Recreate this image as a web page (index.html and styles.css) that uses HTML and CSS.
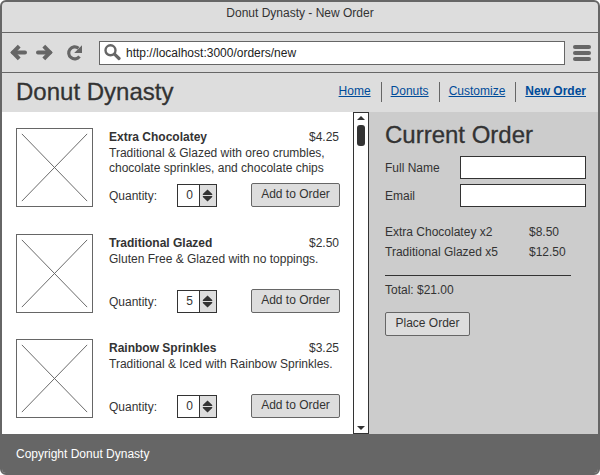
FILE: index.html
```html
<!DOCTYPE html>
<html lang="en">
<head>
<meta charset="utf-8">
<title>Donut Dynasty - New Order</title>
<link rel="stylesheet" href="styles.css">
</head>
<body>
<div class="window">
  <div class="titlebar">Donut Dynasty - New Order</div>
  <div class="toolbar">
    <svg class="nav-icons" width="74" height="17" viewBox="0 0 74 17" fill="none" stroke="#666" stroke-width="4">
      <path d="M3 8.5H15M28 8.5H40" stroke-linecap="round"/>
      <path d="M9.2 2.2L3 8.5L9.2 14.8M33.8 2.2L40 8.5L33.8 14.8"/>
      <path d="M69.5 12.5A6 6 0 1 1 68.5 4.2" stroke-width="3.2"/>
      <path d="M72 1.2V9H64.2Z" fill="#666" stroke="none"/>
    </svg>
    <div class="address">
      <svg width="17" height="17" viewBox="0 0 17 17" fill="none" stroke="#666"><circle cx="6.5" cy="6.3" r="5" stroke-width="2.4"/><path d="M10.5 10.2L15 14.5" stroke-width="3.2" stroke-linecap="round"/></svg>
      <span>http://localhost:3000/orders/new</span>
    </div>
    <div class="menu"><i></i><i></i><i></i></div>
  </div>
  <header class="header">
    <h1>Donut Dynasty</h1>
    <nav><a>Home</a><a>Donuts</a><a>Customize</a><a class="current">New Order</a></nav>
  </header>
  <main class="main">
    <section class="products">
      <article class="product">
        <svg class="thumb" width="77" height="79" viewBox="0 0 77 79"><path d="M5 5L72 74M72 5L5 74"/></svg>
        <div class="info">
          <div class="name"><b>Extra Chocolatey</b><span>$4.25</span></div>
          <p>Traditional &amp; Glazed with oreo crumbles,<br>chocolate sprinkles, and chocolate chips</p>
          <div class="actions"><span class="label">Quantity:</span><div class="spinner"><span>0</span><svg width="17" height="21" viewBox="0 0 17 21"><path d="M8 4L13 9V10H3V9ZM8 17L13 12V11H3V12Z"/></svg></div><button class="add">Add to Order</button></div>
        </div>
      </article>
      <article class="product">
        <svg class="thumb" width="77" height="79" viewBox="0 0 77 79"><path d="M5 5L72 74M72 5L5 74"/></svg>
        <div class="info">
          <div class="name"><b>Traditional Glazed</b><span>$2.50</span></div>
          <p>Gluten Free &amp; Glazed with no toppings.</p>
          <div class="actions"><span class="label">Quantity:</span><div class="spinner"><span>5</span><svg width="17" height="21" viewBox="0 0 17 21"><path d="M8 4L13 9V10H3V9ZM8 17L13 12V11H3V12Z"/></svg></div><button class="add">Add to Order</button></div>
        </div>
      </article>
      <article class="product">
        <svg class="thumb" width="77" height="79" viewBox="0 0 77 79"><path d="M5 5L72 74M72 5L5 74"/></svg>
        <div class="info">
          <div class="name"><b>Rainbow Sprinkles</b><span>$3.25</span></div>
          <p>Traditional &amp; Iced with Rainbow Sprinkles.</p>
          <div class="actions"><span class="label">Quantity:</span><div class="spinner"><span>0</span><svg width="17" height="21" viewBox="0 0 17 21"><path d="M8 4L13 9V10H3V9ZM8 17L13 12V11H3V12Z"/></svg></div><button class="add">Add to Order</button></div>
        </div>
      </article>
    </section>
    <div class="scrollbar">
      <svg width="8" height="4" viewBox="0 0 8 4"><path d="M4 0L8 4H0Z"/></svg>
      <div class="handle"></div>
      <svg class="down" width="8" height="4" viewBox="0 0 8 4"><path d="M0 0H8L4 4Z"/></svg>
    </div>
    <aside class="order">
      <h2>Current Order</h2>
      <label class="field"><span>Full Name</span><input type="text"></label>
      <label class="field"><span>Email</span><input type="text"></label>
      <div class="lines">
        <div><span>Extra Chocolatey x2</span><span>$8.50</span></div>
        <div><span>Traditional Glazed x5</span><span>$12.50</span></div>
      </div>
      <div class="total">Total: $21.00</div>
      <button class="place">Place Order</button>
    </aside>
  </main>
  <footer class="footer">Copyright Donut Dynasty</footer>
</div>
</body>
</html>
```
FILE: styles.css
```css
* { box-sizing: border-box; }
body { margin: 0; background: #fff; color: #333; font: 12px/15px "Liberation Sans", Arial, sans-serif; }
h1, h2, p { margin: 0; font-weight: normal; }
h1, h2 { -webkit-text-stroke: .3px #333; }
.window { width: 600px; height: 475px; border: 2px solid #666; border-radius: 6px; overflow: hidden; display: flex; flex-direction: column; background: #ddd; }
.window > * { flex-shrink: 0; }
.titlebar { height: 31px; padding-top: 4px; border-bottom: 1px solid #666; text-align: center; }
.toolbar { height: 40px; border-bottom: 1px solid #666; display: flex; align-items: center; padding: 0 7px 0 8px; }
.nav-icons { margin-right: 15px; }
.address { width: 466px; height: 24px; border: 1px solid #666; background: #fff; display: flex; align-items: center; padding-left: 4px; color: #222; }
.address svg { margin-right: 5px; }
.address span { padding-top: 1px; }
.menu { width: 18px; margin-left: 8px; display: flex; flex-direction: column; gap: 2px; }
.menu i { height: 4px; border-radius: 2px; background: #666; }
.header { height: 39px; padding: 0 12px 0 14px; display: flex; justify-content: space-between; }
h1 { font-size: 24px; line-height: 37px; }
nav { display: flex; height: 20px; margin-top: 9px; line-height: 18px; }
nav a { color: #004b99; text-decoration: underline; padding: 0 10px 0 9px; border-left: 1px solid #666; }
nav a:first-child { border-left: 0; }
nav .current { font-weight: bold; padding-right: 0; }
.main { height: 322px; display: flex; }
.products { width: 351px; background: #fff; padding: 16px 13px 0 14px; }
.product { display: flex; height: 79px; margin-bottom: 27px; }
.product + .product { margin-bottom: 26px; }
.thumb { border: 1px solid #666; margin-right: 16px; fill: none; stroke: #666; stroke-width: 1; }
.info { width: 231px; display: flex; flex-direction: column; }
.name { height: 18px; line-height: 18px; display: flex; justify-content: space-between; padding-right: 1px; }
.info p { height: 37px; line-height: 15px; white-space: nowrap; }
.actions { display: flex; height: 24px; align-items: flex-end; }
.label { width: 68px; line-height: 22px; }
.spinner { width: 40px; height: 23px; border: 1px solid #333; display: flex; }
.spinner span { width: 21px; text-align: center; line-height: 20px; padding-left: 2px; }
.spinner svg { background: #ddd; border-left: 1px solid #333; fill: #333; }
button { height: 24px; padding: 0 0 1px; border: 1px solid #666; border-radius: 2px; background: #ddd; color: #333; font: inherit; }
.add { width: 89px; margin-left: auto; }
.scrollbar { width: 16px; background: #fff; border: 1px solid #333; display: flex; flex-direction: column; align-items: center; padding: 3px 0; }
.scrollbar svg { fill: #333; }
.handle { width: 8px; height: 21px; margin-top: 5px; border-radius: 3px; background: #333; }
.down { margin-top: auto; }
.order { flex: 1; background: #ccc; padding: 9px 12px 0 16px; }
h2 { font-size: 24px; line-height: 28px; margin-bottom: 7px; }
.field { display: flex; justify-content: space-between; height: 23px; margin-bottom: 5px; line-height: 24px; }
.field input { width: 126px; height: 23px; border: 1px solid #333; padding: 0; background: #fff; }
.lines { width: 186px; height: 64px; margin-top: 5px; padding-top: 10px; border-bottom: 1px solid #333; line-height: 20px; }
.lines div { display: flex; }
.lines span:first-child { width: 144px; }
.total { padding-top: 7px; height: 36px; }
.place { width: 85px; }
.footer { flex: 1; background: #666; color: #fff; padding: 12px 14px 0; line-height: 17px; }
```
